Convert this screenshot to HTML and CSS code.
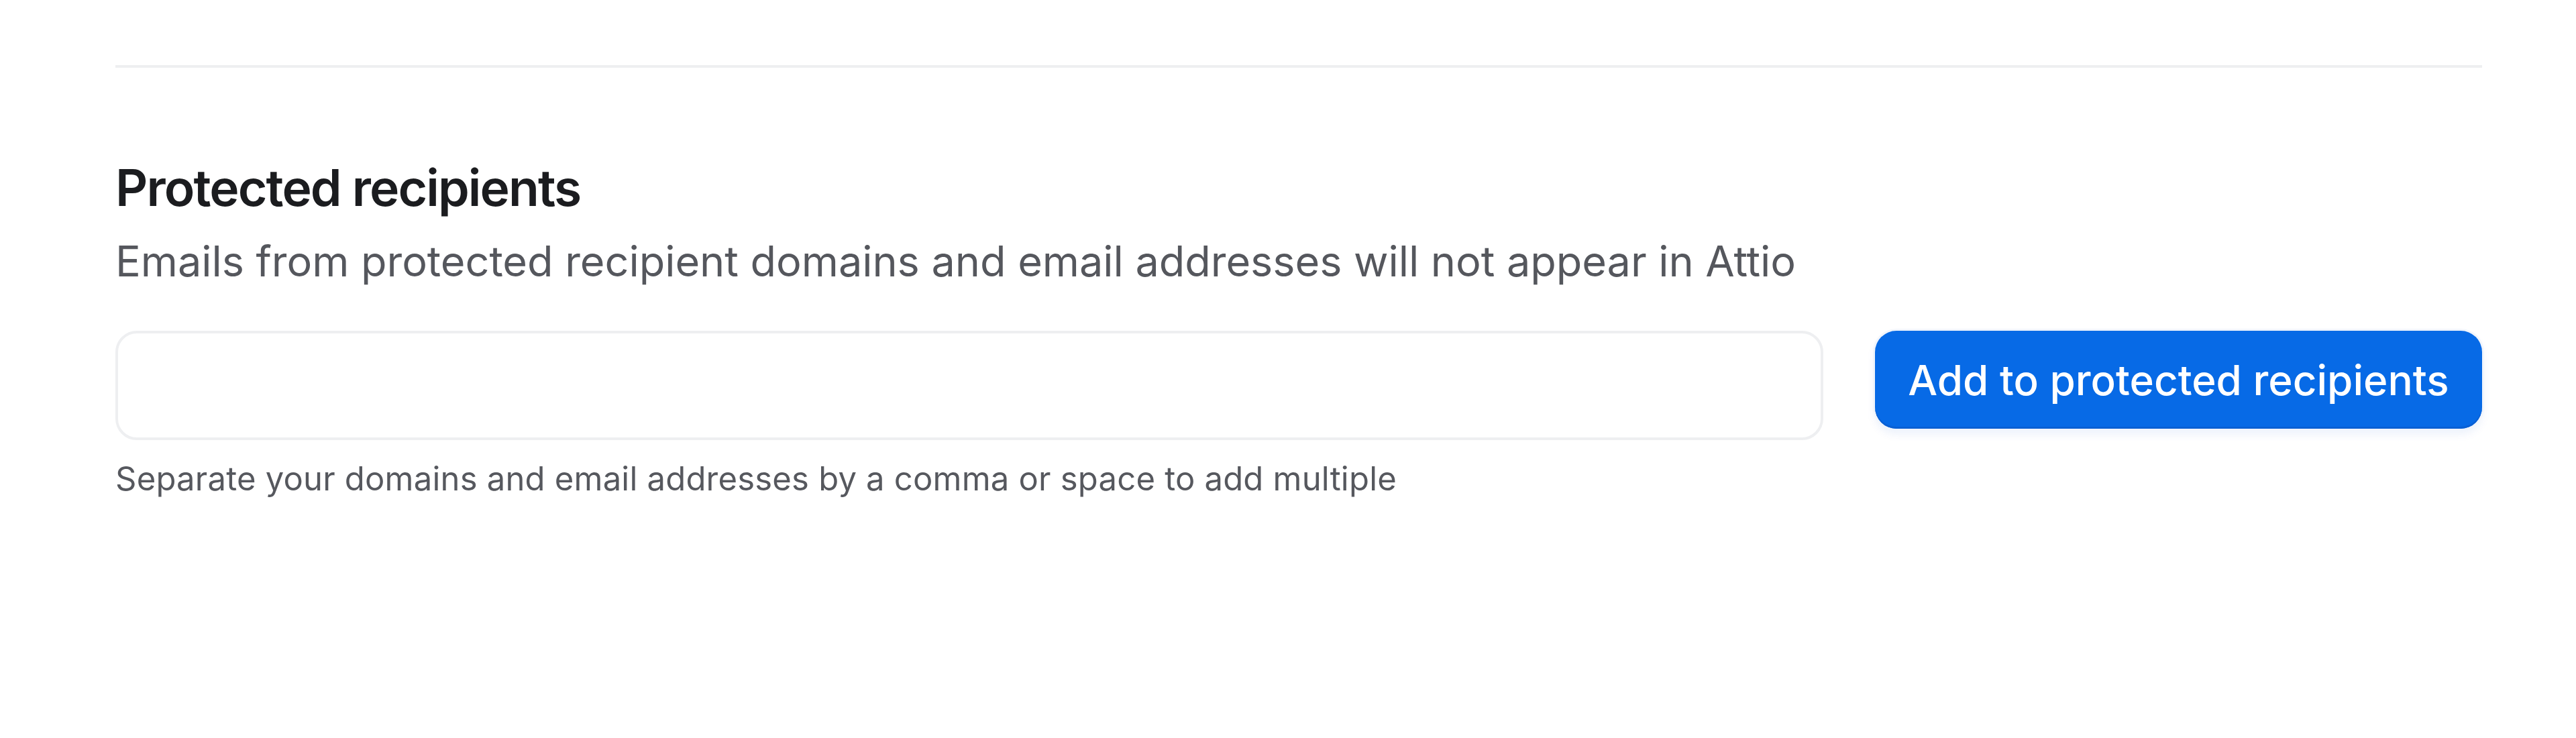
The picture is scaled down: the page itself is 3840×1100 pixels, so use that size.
FILE: index.html
```html
<!DOCTYPE html>
<html lang="en">
<head>
<meta charset="utf-8">
<title>Protected recipients</title>
<link rel="stylesheet" href="styles.css">
</head>
<body>
<main class="page">
  <hr class="divider">
  <section class="section">
    <h2 class="title">Protected recipients</h2>
    <p class="subtitle">Emails from protected recipient domains and email addresses will not appear in Attio</p>
    <div class="form-row">
      <div class="field">
        <input class="input" type="text" aria-label="Protected recipients">
        <p class="helper">Separate your domains and email addresses by a comma or space to add multiple</p>
      </div>
      <button class="button" type="button">Add to protected recipients</button>
    </div>
  </section>
</main>
</body>
</html>
```

FILE: styles.css
```css
* { box-sizing: border-box; }

html, body {
  margin: 0;
  padding: 0;
  background: #ffffff;
}

body {
  font-family: Inter, "Noto Sans", "Liberation Sans", sans-serif;
  color: #1c1d20;
}

.page {
  padding: 97px 140px 0 172px;
}

.divider {
  margin: 0;
  border: 0;
  height: 4px;
  background: #eeeff1;
}

.section {
  padding-top: 129px;
}

.title {
  margin: 0;
  font-size: 75px;
  line-height: 100px;
  font-weight: 600;
  color: #1b1c1f;
  letter-spacing: -1.9px;
}

.subtitle {
  margin: 14px 0 0;
  font-size: 63px;
  line-height: 90px;
  font-weight: 400;
  color: #55575d;
  letter-spacing: -0.05px;
}

.form-row {
  display: flex;
  align-items: flex-start;
  gap: 77px;
  margin-top: 59px;
}

.field {
  flex: 1;
  display: flex;
  flex-direction: column;
}

.input {
  height: 163px;
  width: 100%;
  border: 4px solid #eeeff1;
  border-radius: 32px;
  background: #ffffff;
  font: inherit;
  font-size: 62px;
  padding: 0 40px;
  outline: none;
}

.helper {
  margin: 23px 0 0;
  font-size: 49px;
  line-height: 70px;
  color: #56585e;
  letter-spacing: 0.2px;
}

.button {
  flex: none;
  height: 146px;
  width: 905px;
  border: 0;
  border-radius: 32px;
  background: #076ae6;
  color: #ffffff;
  font-family: inherit;
  font-size: 62px;
  font-weight: 500;
  padding: 0 44px;
  box-shadow: 0 0 0 3px #f1f5fc, 0 8px 14px rgba(7, 80, 200, 0.08), inset 0 -3px 0 #0a60d4;
  cursor: pointer;
}
```
